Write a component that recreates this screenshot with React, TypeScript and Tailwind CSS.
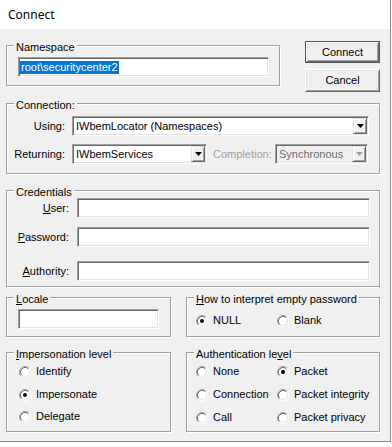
import type { ReactNode } from "react";

const sunken =
  "border border-t-[#a0a0a0] border-l-[#a0a0a0] border-r-white border-b-white shadow-[inset_1px_1px_0_#696969,inset_-1px_-1px_0_#e3e3e3]";
const raised =
  "border border-t-white border-l-white border-r-[#696969] border-b-[#696969] shadow-[inset_1px_1px_0_#e3e3e3,inset_-1px_-1px_0_#a0a0a0]";

function Group({ label, className, children }: { label: ReactNode; className: string; children?: ReactNode }) {
  return (
    <div className={`relative shrink-0 border border-[#a0a0a0] shadow-[inset_1px_1px_0_#fff,1px_1px_0_#fff] ${className}`}>
      <span className="absolute left-[7px] top-[-5px] whitespace-nowrap bg-[#f0f0f0] px-[2px] leading-[13px]">{label}</span>
      {children}
    </div>
  );
}

function TextBox({ className = "" }: { className?: string }) {
  return <div className={`h-[20px] shrink-0 bg-white ${sunken} ${className}`} />;
}

function Combo({ value, className, disabled }: { value: string; className: string; disabled?: boolean }) {
  return (
    <div
      className={`flex h-[20px] shrink-0 items-center ${sunken} ${disabled ? "bg-[#f0f0f0] text-[#6d6d6d]" : "bg-white"} ${className}`}
    >
      <span className="flex-1 overflow-hidden whitespace-nowrap pl-[3px]">{value}</span>
      <div
        className={`my-[1px] mr-[1px] flex h-[16px] w-[14px] items-center justify-center bg-[#f0f0f0] border border-t-[#e3e3e3] border-l-[#e3e3e3] border-r-[#696969] border-b-[#696969] shadow-[inset_1px_1px_0_#fff,inset_-1px_-1px_0_#a0a0a0]`}
      >
        <svg width="7" height="4" viewBox="0 0 7 4">
          <path d="M0 0h7L3.5 4z" fill={disabled ? "#a0a0a0" : "#000"} />
        </svg>
      </div>
    </div>
  );
}

function Radio({ label, checked, className = "" }: { label: string; checked?: boolean; className?: string }) {
  return (
    <div className={`flex h-[13px] items-center ${className}`}>
      <svg width="12" height="12" viewBox="0 0 12 12" className="shrink-0">
        <circle cx="6" cy="6" r="4.5" fill="#fff" />
        <path d="M2.11 9.89A5.5 5.5 0 0 1 9.89 2.11" fill="none" stroke="#a0a0a0" />
        <path d="M9.89 2.11A5.5 5.5 0 0 1 2.11 9.89" fill="none" stroke="#fff" />
        <path d="M2.82 9.18A4.5 4.5 0 0 1 9.18 2.82" fill="none" stroke="#696969" />
        <path d="M9.18 2.82A4.5 4.5 0 0 1 2.82 9.18" fill="none" stroke="#e3e3e3" />
        {checked && <circle cx="6" cy="6" r="2" fill="#000" />}
      </svg>
      <span className="ml-[5px] whitespace-nowrap">{label}</span>
    </div>
  );
}

export default function App() {
  return (
    <div className="h-[447px] w-[392px] overflow-hidden bg-white font-['Liberation_Sans',Arial,sans-serif] text-[11px] leading-[13px] text-black">
      <div className="flex h-[442px] w-[391px] flex-col border-b border-r border-[#888]">
        <div className="flex h-[29px] shrink-0 items-center bg-white pb-[1px] pl-[8px] font-['Noto_Sans',sans-serif] text-[12px]">
          Connect
        </div>
        <div className="flex flex-1 flex-col bg-[#f0f0f0] pl-[6px] pt-[12px]">
          <div className="flex items-start">
            <Group label="Namespace" className="mt-[4px] h-[41px] w-[274px] pl-[11px] pt-[11px]">
              <div className={`flex h-[20px] w-[251px] items-center bg-white pl-[1px] ${sunken}`}>
                <span className="bg-[#0078d7] px-[1px] text-white">root\securitycenter2</span>
              </div>
            </Group>
            <div className="ml-[25px] flex w-[75px] flex-col">
              <div className="h-[22px] border border-[#555]">
                <div className={`flex h-full items-center justify-center bg-[#f0f0f0] ${raised}`}>Connect</div>
              </div>
              <div className={`mt-[6px] flex h-[23px] items-center justify-center bg-[#f0f0f0] ${raised}`}>Cancel</div>
            </div>
          </div>

          <Group label="Connection:" className="mt-[11px] h-[71px] w-[374px] pt-[12px]">
            <div className="flex items-center">
              <span className="w-[58px] text-right">Using:</span>
              <Combo className="ml-[7px] w-[297px]" value="IWbemLocator (Namespaces)" />
            </div>
            <div className="mt-[8px] flex items-center">
              <span className="w-[58px] text-right">Returning:</span>
              <Combo className="ml-[7px] w-[135px]" value="IWbemServices" />
              <span className="ml-[6px] w-[57px] whitespace-nowrap text-[#a0a0a0]">Completion:</span>
              <Combo className="ml-[5px] w-[93px]" value="Synchronous" disabled />
            </div>
          </Group>

          <Group label="Credentials" className="mt-[16px] h-[97px] w-[374px] pt-[7px]">
            <div className="flex items-center">
              <span className="w-[62px] text-right">
                <u>U</u>ser:
              </span>
              <TextBox className="ml-[8px] w-[293px]" />
            </div>
            <div className="mt-[9px] flex items-center">
              <span className="w-[62px] text-right">
                <u>P</u>assword:
              </span>
              <TextBox className="ml-[8px] w-[293px]" />
            </div>
            <div className="mt-[14px] flex items-center">
              <span className="w-[62px] text-right">
                <u>A</u>uthority:
              </span>
              <TextBox className="ml-[8px] w-[293px]" />
            </div>
          </Group>

          <div className="mt-[10px] flex">
            <Group
              label={
                <>
                  <u>L</u>ocale
                </>
              }
              className="h-[40px] w-[165px] pl-[11px] pt-[11px]"
            >
              <TextBox className="w-[141px]" />
            </Group>
            <Group
              label={
                <>
                  <u>H</u>ow to interpret empty password
                </>
              }
              className="ml-[15px] h-[40px] w-[194px] pl-[9px] pt-[16px]"
            >
              <div className="flex">
                <Radio className="w-[81px]" checked label="NULL" />
                <Radio label="Blank" />
              </div>
            </Group>
          </div>

          <div className="mt-[15px] flex">
            <Group
              label={
                <>
                  <u>I</u>mpersonation level
                </>
              }
              className="h-[80px] w-[165px] pl-[12px] pt-[12px]"
            >
              <Radio label="Identify" />
              <Radio className="mt-[10px]" checked label="Impersonate" />
              <Radio className="mt-[9px]" label="Delegate" />
            </Group>
            <Group
              label={
                <>
                  Authentication le<u>v</u>el
                </>
              }
              className="ml-[15px] h-[80px] w-[194px] pl-[9px] pt-[12px]"
            >
              <div className="flex">
                <Radio className="w-[81px]" label="None" />
                <Radio checked label="Packet" />
              </div>
              <div className="mt-[10px] flex">
                <Radio className="w-[81px]" label="Connection" />
                <Radio label="Packet integrity" />
              </div>
              <div className="mt-[10px] flex">
                <Radio className="w-[81px]" label="Call" />
                <Radio label="Packet privacy" />
              </div>
            </Group>
          </div>
        </div>
      </div>
    </div>
  );
}
